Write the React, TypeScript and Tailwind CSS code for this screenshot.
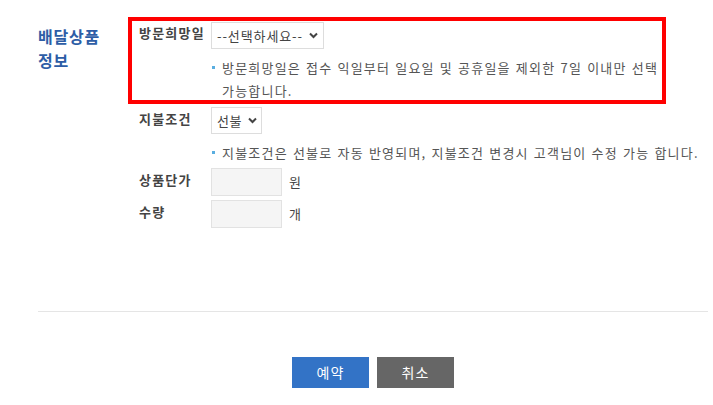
import React from "react";

const font = { fontFamily: '"Noto Sans CJK KR", "Noto Sans", sans-serif' };

function Chevron() {
  return (
    <svg width="9" height="7" viewBox="0 0 9 7" className="shrink-0">
      <path d="M1 1.5 L4.5 5 L8 1.5" fill="none" stroke="#444" strokeWidth="2" />
    </svg>
  );
}

export default function App() {
  return (
    <div className="relative h-[405px] w-[713px] overflow-hidden bg-white" style={font}>
      <div className="flex">
        <div className="w-[128px] shrink-0 pl-[38px] pt-[24px] text-[16px] font-bold leading-[24px] tracking-[0.8px] text-[#2d5da6]">
          배달상품
          <br />
          정보
        </div>
        <div className="relative pl-[11px] pt-[22px]">
          <div className="absolute left-0 top-[17px] h-[87px] w-[538px] border-4 border-[#ff0000]" />
          <div className="flex items-start">
            <div className="w-[72px] text-[13px] font-bold leading-[22px] tracking-[1.2px] text-[#444]">방문희망일</div>
            <div className="flex h-[27px] w-[113px] items-center justify-between border border-[#ddd] pl-[5px] pr-[5px] text-[13px] tracking-[0.9px] text-[#444]">
              <span>--선택하세요--</span>
              <Chevron />
            </div>
          </div>
          <div className="ml-[72px] mt-[7px]">
            <div className="flex items-start text-[13px] leading-[23px] tracking-[1.2px] text-[#555]" style={{ wordSpacing: "1px" }}>
              <span className="mt-[10px] ml-[1px] mr-[7px] h-[3px] w-[3px] shrink-0 bg-[#5aaee0]" />
              <span className="w-[440px]">방문희망일은 접수 익일부터 일요일 및 공휴일을 제외한 7일 이내만 선택 가능합니다.</span>
            </div>
          </div>
          <div className="mt-[5px] flex items-start">
            <div className="w-[72px] text-[13px] font-bold leading-[24px] tracking-[1.2px] text-[#444]">지불조건</div>
            <div className="flex h-[27px] w-[51px] items-center justify-between border border-[#ddd] pl-[5px] pr-[4px] text-[13px] tracking-[0.5px] text-[#444]">
              <span>선불</span>
              <Chevron />
            </div>
          </div>
          <div className="ml-[72px] mt-[7px]">
            <div className="flex items-start text-[13px] leading-[23px] tracking-[1.2px] text-[#555]" style={{ wordSpacing: "1px" }}>
              <span className="mt-[10px] ml-[1px] mr-[7px] h-[3px] w-[3px] shrink-0 bg-[#5aaee0]" />
              <span className="whitespace-nowrap">지불조건은 선불로 자동 반영되며, 지불조건 변경시 고객님이 수정 가능 합니다.</span>
            </div>
          </div>
          <div className="mt-[4px] flex items-start">
            <div className="w-[72px] text-[13px] font-bold leading-[24px] tracking-[1.2px] text-[#444]">상품단가</div>
            <div className="h-[28px] w-[71px] border border-[#e2e2e2] bg-[#f5f5f5]" />
            <span className="ml-[7px] text-[13px] leading-[28px] text-[#444]">원</span>
          </div>
          <div className="mt-[4px] flex items-start">
            <div className="w-[72px] text-[13px] font-bold leading-[24px] tracking-[1.2px] text-[#444]">수량</div>
            <div className="h-[28px] w-[71px] border border-[#e2e2e2] bg-[#f5f5f5]" />
            <span className="ml-[7px] text-[13px] leading-[28px] text-[#444]">개</span>
          </div>
        </div>
      </div>
      <div className="ml-[38px] mt-[83px] w-[670px] border-t border-[#e5e5e5]" />
      <div className="ml-[38px] mt-[45px] flex w-[670px] justify-center gap-[8px]">
        <button className="h-[31px] w-[77px] bg-[#3373c6] text-[14px] tracking-[1px] text-white">예약</button>
        <button className="h-[31px] w-[77px] bg-[#666666] text-[14px] tracking-[1px] text-white">취소</button>
      </div>
    </div>
  );
}
